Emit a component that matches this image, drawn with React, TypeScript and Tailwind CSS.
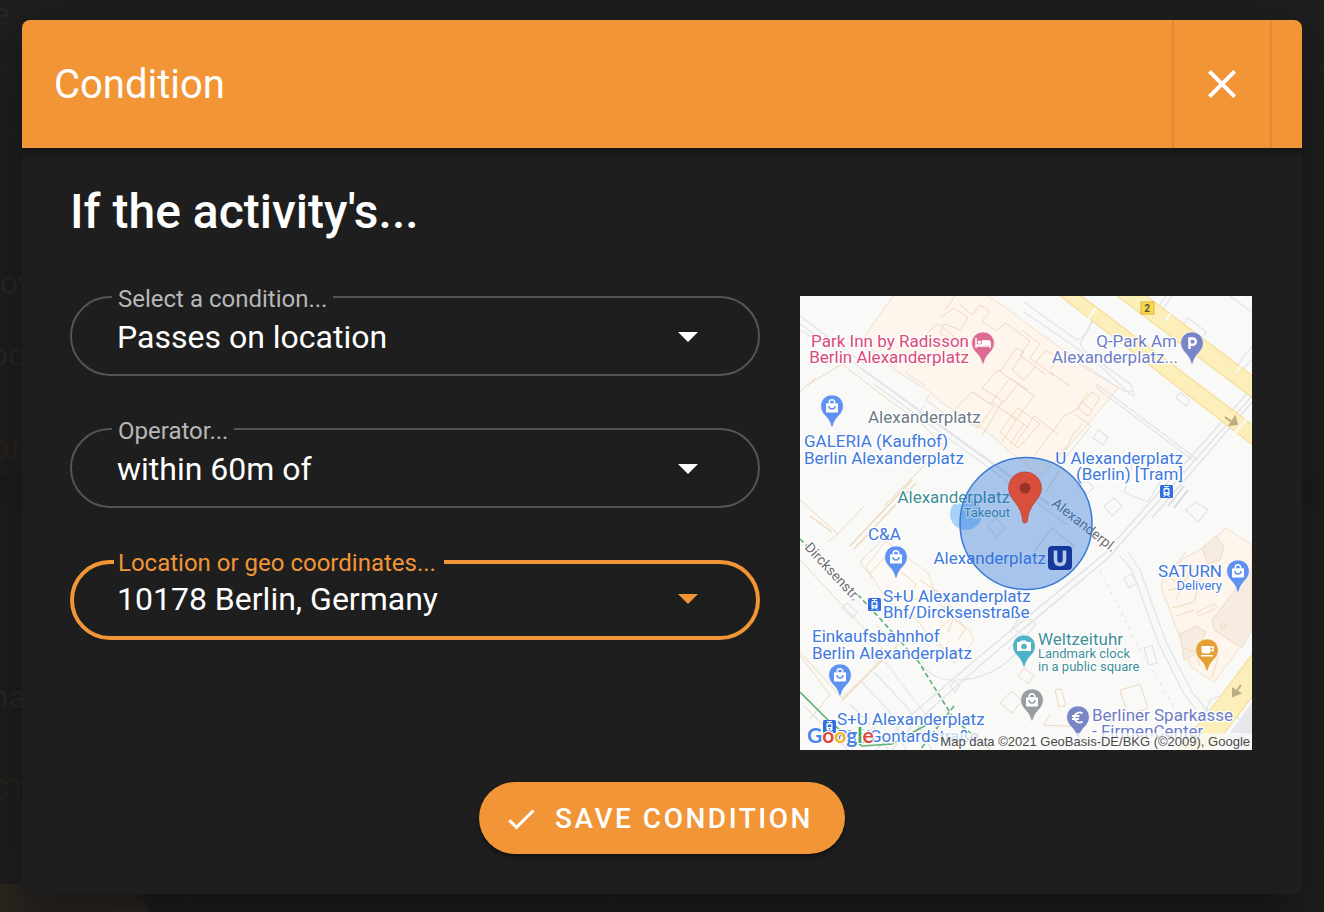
import type { ReactNode } from "react";

const CONDITIONS = ["Passes on location", "Starts at location", "Ends at location"];
const OPERATORS = ["within 60m of", "within 100m of", "within 250m of"];

function Caret({ active }: { active?: boolean }) {
  return (
    <svg
      viewBox="0 0 24 24"
      aria-hidden="true"
      className={`pointer-events-none col-start-1 row-start-1 size-12 justify-self-end ${active ? "text-[#f19536]" : "text-white"}`}
    >
      <path d="M7 9.500l5 5 5-5z" fill="currentColor" />
    </svg>
  );
}

function Field({ id, label, active, children }: { id: string; label: string; active?: boolean; children: ReactNode }) {
  return (
    <fieldset
      className={
        active
          ? "-mt-[13px] h-[93px] min-w-0 rounded-[40px] border-4 border-[#f19536] pr-11 pl-10"
          : "-mt-[15px] h-[95px] min-w-0 rounded-[40px] border-2 border-[#555555] pr-[46px] pl-10"
      }
    >
      <legend className={active ? "pt-0.5 pr-2 pl-1 text-[#f19536]" : "px-1.5 pt-1 text-[#b7b7b7]"}>
        <label htmlFor={id} className="block text-2xl leading-7">
          {label}
        </label>
      </legend>
      <div className={active ? "-mt-0.5 grid items-center pl-[3px]" : "grid items-center pl-[5px]"}>{children}</div>
    </fieldset>
  );
}

const controlClass =
  "col-start-1 row-start-1 h-12 w-full min-w-0 appearance-none bg-transparent p-0 pr-12 text-[32px] leading-10 text-white outline-none";

function PoiPin({ x, y, color, children }: { x: number; y: number; color: string; children?: ReactNode }) {
  return (
    <g transform={`translate(${x} ${y})`}>
      <path
        d="M0 0C-6.6 0-11.3 4.9-11.3 11.2c0 4.3 2.3 7.3 5 10.1C-3 24.700-1.700 28-.9 31.200c.3 1.100 1.500 1.100 1.800 0C1.700 28 3 24.700 6.300 21.300c2.700-2.800 5-5.800 5-10.100C11.300 4.900 6.600 0 0 0z"
        fill={color}
        stroke="#fff"
        strokeWidth=".6"
      />
      {children}
    </g>
  );
}

function BagGlyph() {
  return (
    <>
      <path d="M-2.700 8.500V7.400a2.700 2.700 0 0 1 5.400 0v1.100" fill="none" stroke="#fff" strokeWidth="1.500" />
      <rect x="-6" y="8.300" width="12" height="9.200" rx="1" fill="#fff" />
    </>
  );
}

function BagPin({ x, y, color }: { x: number; y: number; color: string }) {
  return (
    <PoiPin x={x} y={y} color={color}>
      <BagGlyph />
      <path d="M-3 11a3 3 0 0 0 6 0" fill="none" stroke={color} strokeWidth="1.500" />
    </PoiPin>
  );
}

function TramIcon({ x, y }: { x: number; y: number }) {
  return (
    <g transform={`translate(${x} ${y})`}>
      <rect width="13" height="13" rx="1.500" fill="#2f6fe0" />
      <path d="M4 1.500h5M6.500 1.500v2" stroke="#fff" strokeWidth="1" />
      <rect x="3.500" y="3" width="6" height="7.500" rx="1.200" fill="#fff" />
      <rect x="4.700" y="4.500" width="3.600" height="2.500" fill="#2f6fe0" />
      <circle cx="6.500" cy="8.800" r=".8" fill="#2f6fe0" />
      <path d="M4.500 10.500l-1 1.500M8.500 10.500l1 1.500" stroke="#fff" />
    </g>
  );
}

type Label = { x: number; y: number; text: string; color: string; end?: boolean; small?: boolean };

const BLUE = "#4079dd";
const TEAL = "#3f8f99";
const INDIGO = "#6d7cc6";
const PINK = "#da4a7b";

const LABELS: Label[] = [
  { x: 969, y: 347, text: "Park Inn by Radisson", color: PINK, end: true },
  { x: 969, y: 363, text: "Berlin Alexanderplatz", color: PINK, end: true },
  { x: 868, y: 423, text: "Alexanderplatz", color: "#6c7a87" },
  { x: 804, y: 447, text: "GALERIA (Kaufhof)", color: BLUE },
  { x: 804, y: 464, text: "Berlin Alexanderplatz", color: BLUE },
  { x: 1010, y: 503, text: "Alexanderplatz", color: TEAL, end: true },
  { x: 1010, y: 517, text: "Takeout", color: TEAL, end: true, small: true },
  { x: 1177, y: 347, text: "Q-Park Am", color: INDIGO, end: true },
  { x: 1178, y: 363, text: "Alexanderplatz...", color: INDIGO, end: true },
  { x: 1183, y: 464, text: "U Alexanderplatz", color: BLUE, end: true },
  { x: 1183, y: 480, text: "(Berlin) [Tram]", color: BLUE, end: true },
  { x: 868, y: 540, text: "C&A", color: BLUE },
  { x: 1046, y: 564, text: "Alexanderplatz", color: BLUE, end: true },
  { x: 883, y: 602, text: "S+U Alexanderplatz", color: BLUE },
  { x: 883, y: 618, text: "Bhf/Dircksenstraße", color: BLUE },
  { x: 812, y: 642, text: "Einkaufsbahnhof", color: BLUE },
  { x: 812, y: 659, text: "Berlin Alexanderplatz", color: BLUE },
  { x: 837, y: 725, text: "S+U Alexanderplatz", color: BLUE },
  { x: 837, y: 742, text: "Bhf/Gontardstraße", color: BLUE },
  { x: 1222, y: 577, text: "SATURN", color: BLUE, end: true },
  { x: 1222, y: 590, text: "Delivery", color: BLUE, end: true, small: true },
  { x: 1038, y: 645, text: "Weltzeituhr", color: TEAL },
  { x: 1038, y: 658, text: "Landmark clock", color: TEAL, small: true },
  { x: 1038, y: 671, text: "in a public square", color: TEAL, small: true },
  { x: 1092, y: 721, text: "Berliner Sparkasse", color: INDIGO },
  { x: 1092, y: 737, text: "- FirmenCenter", color: INDIGO },
];

function LocationMap() {
  return (
    <svg
      viewBox="800 296 452 454"
      role="img"
      aria-label="Map of Alexanderplatz, Berlin"
      className="w-[452px] shrink-0 bg-[#f9f9f8] font-['Roboto',sans-serif]"
    >
      {/* buildings */}
      <g fill="#fef6ec" stroke="#f0dfca" strokeWidth="1">
        <path d="M893 296l-31 44 14 14 22 18 32 20 11 10 52 34 17 16 31 24 33-36 16-18 28-34-80-56-34-26-34-20-20-10z" />
        <path d="M1226 528l26 17v86l-38 51-23-15-30-80 2-8 20-20 22-12z" />
        <path d="M866 567l20-26 42 32 10 30 32 28 4 10-20 22-10-10-28-34-30-20z" fill="#fdfaf5" />
      </g>
      <g fill="#f6ece0" stroke="#eedcc6">
        <path d="M1252 568v62l-10 18-28-18-2-10 34-44z" />
        <path d="M1202 548l14-12 8 10-4 14-12 4zM1180 634l16-8 10 6-10 22-12 6z" />
        <path d="M1197 612l18-8 2 4-18 8z" fill="none" />
      </g>
      <g fill="none" stroke="#efd9bd" strokeWidth="1">
        <path d="M945 310l10-14M940 318l14-10 14 10-8 12-16-6-4 10 18 8 10-6M930 330l8-6 16 12-10 12-20-10zM960 305l12 10 8-10 10 6-8 10 14 10 10-8 24 18-10 14 26 20" />
        <path d="M998 370l20 14-14 18-22-14zM1018 384l16 12-18 24-24-18M930 394l-4 6 22 16 24-24 18 12 20-26 18 12M972 392l22 14-16 22-22-12M1002 402l-20 34M1016 420l-14 22M1000 432l18-24 22 16-22 24zM1007 412l22 16M1014 446l20-30 24 18M1024 424l-14 20" />
        <path d="M1022 330l18 14-10 14 24 18M1036 362l10-12 12 8-8 12M1050 372l20 14M1000 372l16-24 8 4-12 18 12 10 12-14" />
        <path d="M1078 408l14-16 8 6-12 18zM1082 402l10 8M1075 414l16 12-32 40M1088 392l-12 18-12 6-30 40M1082 424l-10 12-6 14M1060 470l-14 22-20-16M1066 446l-12 18" />
        <path d="M1164 578l22-26M1168 576l14 10-6 14M1180 586l14-16M1172 608l22-6 6-22 10-12M1176 616l18-6M1168 590l12-2M1184 648l10 4 14-8 10 14-6 20M1196 652l4 14" />
        <circle cx="1223" cy="626" r="2.500" />
        <path d="M800 392l16-14M806 386l36-22 44 34 34 24 24 24-60 60M800 500l38 34-10 8M838 534l26-28M882 540l-22 22 12 16M870 574l14-16 32 26-8 16M914 600l22-10 20 22-8 20M940 628l12-10 14 10-8 12M936 640l14 16M920 580l30 20-12 16M800 560l88 94-46 44-42-46M842 700l46-48M876 625l22 20-56 56M800 655l30 40-20 24" />
        <path d="M832 532l-22-16M850 546l62-66M854 549l62-66" strokeWidth="1.500" />
        <path d="M1055 690l6-1 5 16-7 2zM1000 703l12-12 10 10-10 12zM1050 715l-6 10 40 2M1120 690l20-6 8 24-20 8zM1024 668l10 8-6 8-10-8z" />
      </g>

      {/* streets, tracks and outlines */}
      <g fill="none" stroke="#e3e4e9" strokeWidth="1.200">
        <path d="M800 316l64 48M800 324l250 180M860 368l190 138M874 384l192 140M925 405l-14 18M905 372l20 14M800 330l30 18" />
        <path d="M1024 302l50 36q8 4 12-6l8-14M1024 312l70 48 36 34q8 6 2-4M1080 344l14-24M1080 344l6 8 44 32q6 8-4 8l-34-20-18-12" />
        <path d="M1098 385l100 75M1098 389l96 72M1098 385q-2-2 0 4" />
        <path d="M1252 388l-148 166L980 656l-70 60-34 34M1252 396l-144 162L984 662l-70 62-22 26M1252 402l-100 116" strokeWidth="1.600" />
        <path d="M1166 296l-14 20M1172 296l-14 20M1230 296l22 16M1252 346l-14 18M1252 360l-12 12" />
        <path d="M1188 318l18 14-4 6-18-14zM1180 392l10 8-4 6-10-8zM1098 430l10 7-5 8-10-7zM1130 466l26-8 6 20-14 24-24-10 8-24zM1186 510l10-8 12 8-10 12zM1124 578l7-4 6 9-8 5zM1144 648l8-3 5 18-8 2z" />
        <path d="M1120 556l12 14 26 72 26 52 26 34M1128 552l12 18 26 72 26 50 28 34" />
        <path d="M1100 570l40 80 36 60" strokeDasharray="3 5" />
        <path d="M988 526l8-8 10 10-10 9zM1008 650l10-12M950 686l5-5 5 5-5 6zM842 608l5-5 10 9-4 6zM1012 628l10-14 14 10-10 12zM1078 486l8-6 8 8-7 6zM1104 506l10-8 8 8-10 10z" />
        <path d="M912 652q18 30 44 28 34 0 60-26M862 682l28 30 16 38M874 672l34 36 24 42M884 660l30 40 40 50M850 704l24 24 14 22M804 706l44 44" />
        <path d="M1220 700l30 30M1196 740l14-40 8-4 8 8" />
      </g>
      <path d="M1168 506l16-20M1174 508l14-18" stroke="#d9dade" strokeWidth="2" />
      <path d="M1228 736l24-34v48h-16z" fill="#e7e7ec" />

      {/* main roads */}
      <g fill="#fdefb9" stroke="#f6dc98" strokeWidth="1.200">
        <path d="M1059 295h21l174 131v20z" />
        <path d="M1116 295h29l109 82v22z" />
        <path d="M1254 652l-50 66-28 34h34l44-58z" />
      </g>
      <path d="M1086 322l10-14M1166 320l8-12M1236 372l8-10M1233 435l19-22" stroke="#fbfbfa" strokeWidth="2" />
      <g fill="#b9ad87" stroke="#b9ad87" strokeWidth="2">
        <path d="M1225 417l7 5M1230 425l7-1-2-7z" />
        <path d="M1241 685l-5 7M1233 689v7l7-3z" />
      </g>
      <rect x="1141" y="302" width="13" height="12" fill="#fbd84a" stroke="#d5b743" />
      <text x="1147" y="312" textAnchor="middle" className="fill-[#5c5433] text-[10px] font-bold">
        2
      </text>

      {/* green walking routes */}
      <g fill="none" stroke="#5bb374" strokeWidth="1.600">
        <path d="M800 539l60 58 24 26 34 38 36 58 40 34" strokeDasharray="5 3" />
        <path d="M954 706l-34 44" strokeDasharray="5 3" />
        <path d="M800 692l32 32 30 22 30-2 36-20" />
      </g>

      <circle cx="966" cy="514" r="16" fill="#a7d3f8" />
      <path d="M1052 528l22 18-16 24-24-18z" fill="none" stroke="#d9d7b8" />

      {/* map labels */}
      <g className="[paint-order:stroke]" stroke="#ffffff" strokeWidth="2.500" strokeLinejoin="round">
        {LABELS.map((l) => (
          <text
            key={`${l.text}-${l.x}-${l.y}`}
            x={l.x}
            y={l.y}
            fill={l.color}
            textAnchor={l.end ? "end" : "start"}
            className={l.small ? "text-[13px]" : "text-[17px]"}
          >
            {l.text}
          </text>
        ))}
        <text transform="translate(804 548) rotate(47)" fill="#6d7175" className="text-sm">
          Dircksenstr.
        </text>
        <text transform="translate(1051 505) rotate(38)" fill="#6d7175" className="text-sm">
          Alexanderpl.
        </text>
      </g>

      <TramIcon x={1160} y={485} />
      <TramIcon x={868} y={598} />
      <TramIcon x={823} y={720} />

      <PoiPin x={983} y={332} color="#dd6b94">
        <path d="M-7 6v10M-7 14H7M7 16v-5.500q0-1.500-1.500-1.500H-.5v4H-7" fill="none" stroke="#fff" strokeWidth="1.500" />
        <path d="M-.5 8.500h6q2 0 2 2V13h-8z" fill="#fff" />
        <circle cx="-3.700" cy="10.300" r="1.700" fill="#fff" />
      </PoiPin>
      <PoiPin x={1192} y={332} color="#7986c5">
        <path d="M-2.500 17V6.500h3.200a3.100 3.100 0 0 1 0 6.200h-3.200" fill="none" stroke="#fff" strokeWidth="2.500" />
      </PoiPin>
      <BagPin x={832} y={395} color="#5f92f0" />
      <BagPin x={896} y={546} color="#5f92f0" />
      <BagPin x={840} y={664} color="#5f92f0" />
      <BagPin x={1238} y={560} color="#5f92f0" />
      <BagPin x={1032} y={689} color="#979da3" />
      <PoiPin x={1024} y={635} color="#4fb1c6">
        <path d="M-7 7h3l1-1.500h5L3 7h4v9H-7z" fill="#fff" />
        <circle cx="0" cy="11.500" r="2.800" fill="#4fb1c6" />
      </PoiPin>
      <PoiPin x={1207} y={639} color="#e59f35">
        <path d="M-5.500 7h9v5q0 2.500-2.500 2.500h-4q-2.500 0-2.500-2.500z" fill="#fff" />
        <path d="M3.500 8h2.700v3.500H3.500M-6 16.800H6" fill="none" stroke="#fff" strokeWidth="1.400" />
      </PoiPin>
      <PoiPin x={1078} y={706} color="#7986c5">
        <path d="M4.500 7.500A5 5 0 1 0 4.500 15.500M-6 10h7.500M-6 13h7" fill="none" stroke="#fff" strokeWidth="1.800" />
      </PoiPin>

      {/* search radius */}
      <circle cx="1026" cy="523.500" r="66" fill="#1967d2" fillOpacity=".36" stroke="#3a7bd5" strokeWidth="1.500" />
      <rect x="1048" y="546" width="24" height="24" rx="4" fill="#14389b" />
      <path d="M1055.500 550.500v9q0 5 4.500 5t4.500-5v-9" fill="none" stroke="#b4cbe9" strokeWidth="3.600" />

      <path
        d="M1025 472c-9.500 0-16.300 7.200-16.300 16 0 6 2.800 9.500 6.300 14 4.500 5.800 7 11 7.600 18.500.2 3.300 4.600 3.300 4.800 0 .6-7.500 3.100-12.700 7.600-18.500 3.500-4.500 6.300-8 6.300-14 0-8.800-6.800-16-16.300-16z"
        fill="#d94f3d"
        stroke="#b93f30"
        strokeWidth=".8"
      />
      <circle cx="1025" cy="488" r="5.500" fill="#9b3328" />

      {/* attribution */}
      <rect x="938" y="733" width="314" height="17" fill="#f9f9f8" fillOpacity=".75" />
      <text x="1250" y="746" textAnchor="end" className="fill-[#4a4a4a] font-['Liberation_Sans',sans-serif] text-[13px]">
        Map data ©2021 GeoBasis-DE/BKG (©2009), Google
      </text>
      <text
        x="807"
        y="743"
        stroke="#fff"
        strokeWidth="2"
        strokeLinejoin="round"
        className="font-['Lato',sans-serif] text-[21px] font-bold [paint-order:stroke]"
      >
        <tspan fill="#4a83ee">G</tspan>
        <tspan fill="#e04a3d">o</tspan>
        <tspan fill="#f3b71f">o</tspan>
        <tspan fill="#4a83ee">g</tspan>
        <tspan fill="#3fa757">l</tspan>
        <tspan fill="#e04a3d">e</tspan>
      </text>
    </svg>
  );
}

function Backdrop() {
  return (
    <div aria-hidden="true" className="absolute inset-0 overflow-hidden text-[32px] leading-10 text-[#282828]">
      <div className="absolute inset-x-0 top-[68px] h-[62px] border-y border-[#232323]" />
      <span className="absolute top-[-6px] left-[-7px]">e</span>
      <span className="absolute top-[263px] left-0">ov</span>
      <span className="absolute top-[335px] left-[-10px]">oc</span>
      <span className="absolute top-[430px] left-[-9px] text-[28px] font-medium text-[#2a231c]">ON</span>
      <div className="absolute inset-x-0 top-[476px] h-[30px] bg-[#1d1d1d]" />
      <span className="absolute top-[677px] left-[-9px]">na</span>
      <span className="absolute top-[770px] left-[-9px] text-[28px] font-medium text-[#2a231c]">CT</span>
      <div className="absolute inset-x-0 top-[819px] h-[34px] border-y border-[#222222]" />
      <div className="absolute top-[884px] left-[-220px] h-[72px] w-[370px] rounded-full bg-[#2c2620]" />
      <div className="absolute top-[884px] left-[180px] h-[72px] w-[438px] rounded-full border-2 border-[#282121]" />
    </div>
  );
}

export default function App() {
  return (
    <div className="relative flex min-h-screen flex-col overflow-hidden bg-[#1f1f1f] px-[22px] pt-5 pb-[18px] font-['Roboto',sans-serif] text-white">
      <Backdrop />
      <section
        role="dialog"
        aria-labelledby="dialog-title"
        className="relative flex flex-col rounded-lg bg-[#1e1e1e] shadow-[0_22px_30px_-14px_rgba(0,0,0,0.2),0_48px_76px_6px_rgba(0,0,0,0.14),0_18px_92px_16px_rgba(0,0,0,0.12)]"
      >
        <header className="flex h-32 items-stretch justify-between overflow-hidden rounded-t-lg bg-[#f19536] px-8">
          <h1 id="dialog-title" className="self-center pt-0.5 text-[40px] leading-[60px]">
            Condition
          </h1>
          <button
            type="button"
            aria-label="Close"
            className="flex w-24 items-center justify-center shadow-[0_0_3px_rgba(0,0,0,0.25)]"
          >
            <svg viewBox="0 0 24 24" aria-hidden="true" className="size-12">
              <path
                d="M19,6.410L17.590,5L12,10.590L6.410,5L5,6.410L10.590,12L5,17.590L6.410,19L12,13.410L17.590,19L19,17.590L13.410,12L19,6.410Z"
                fill="currentColor"
              />
            </svg>
          </button>
        </header>
        <div className="h-3 bg-linear-to-b from-[#151515] to-[#1e1e1e]" />

        <form className="flex flex-col px-12 pt-5 pb-10" onSubmit={(e) => e.preventDefault()}>
          <h2 className="text-5xl leading-[64px] font-medium">If the activity's...</h2>

          <div className="flex items-start gap-10 pt-[52px] pr-0.5">
            <div className="flex min-w-0 flex-1 flex-col gap-[52px]">
              <Field id="condition" label="Select a condition...">
                <select id="condition" className={controlClass}>
                  {CONDITIONS.map((c) => (
                    <option key={c}>{c}</option>
                  ))}
                </select>
                <Caret />
              </Field>
              <Field id="operator" label="Operator...">
                <select id="operator" className={controlClass}>
                  {OPERATORS.map((o) => (
                    <option key={o}>{o}</option>
                  ))}
                </select>
                <Caret />
              </Field>
              <Field id="location" label="Location or geo coordinates..." active>
                <input id="location" type="text" defaultValue="10178 Berlin, Germany" className={controlClass} />
                <Caret active />
              </Field>
            </div>
            <LocationMap />
          </div>

          <button
            type="submit"
            className="mt-8 flex h-[72px] items-center gap-4 self-center rounded-full bg-[#f19536] pt-0.5 pr-8 pl-6 text-[28px] leading-9 font-medium tracking-[0.09em] uppercase shadow-[0_3px_4px_rgba(0,0,0,0.4)]"
          >
            <svg viewBox="0 0 24 24" aria-hidden="true" className="size-9">
              <path d="M21,7L9,19L3.500,13.500L4.910,12.090L9,16.170L19.590,5.590L21,7Z" fill="currentColor" />
            </svg>
            Save Condition
          </button>
        </form>
      </section>
    </div>
  );
}
